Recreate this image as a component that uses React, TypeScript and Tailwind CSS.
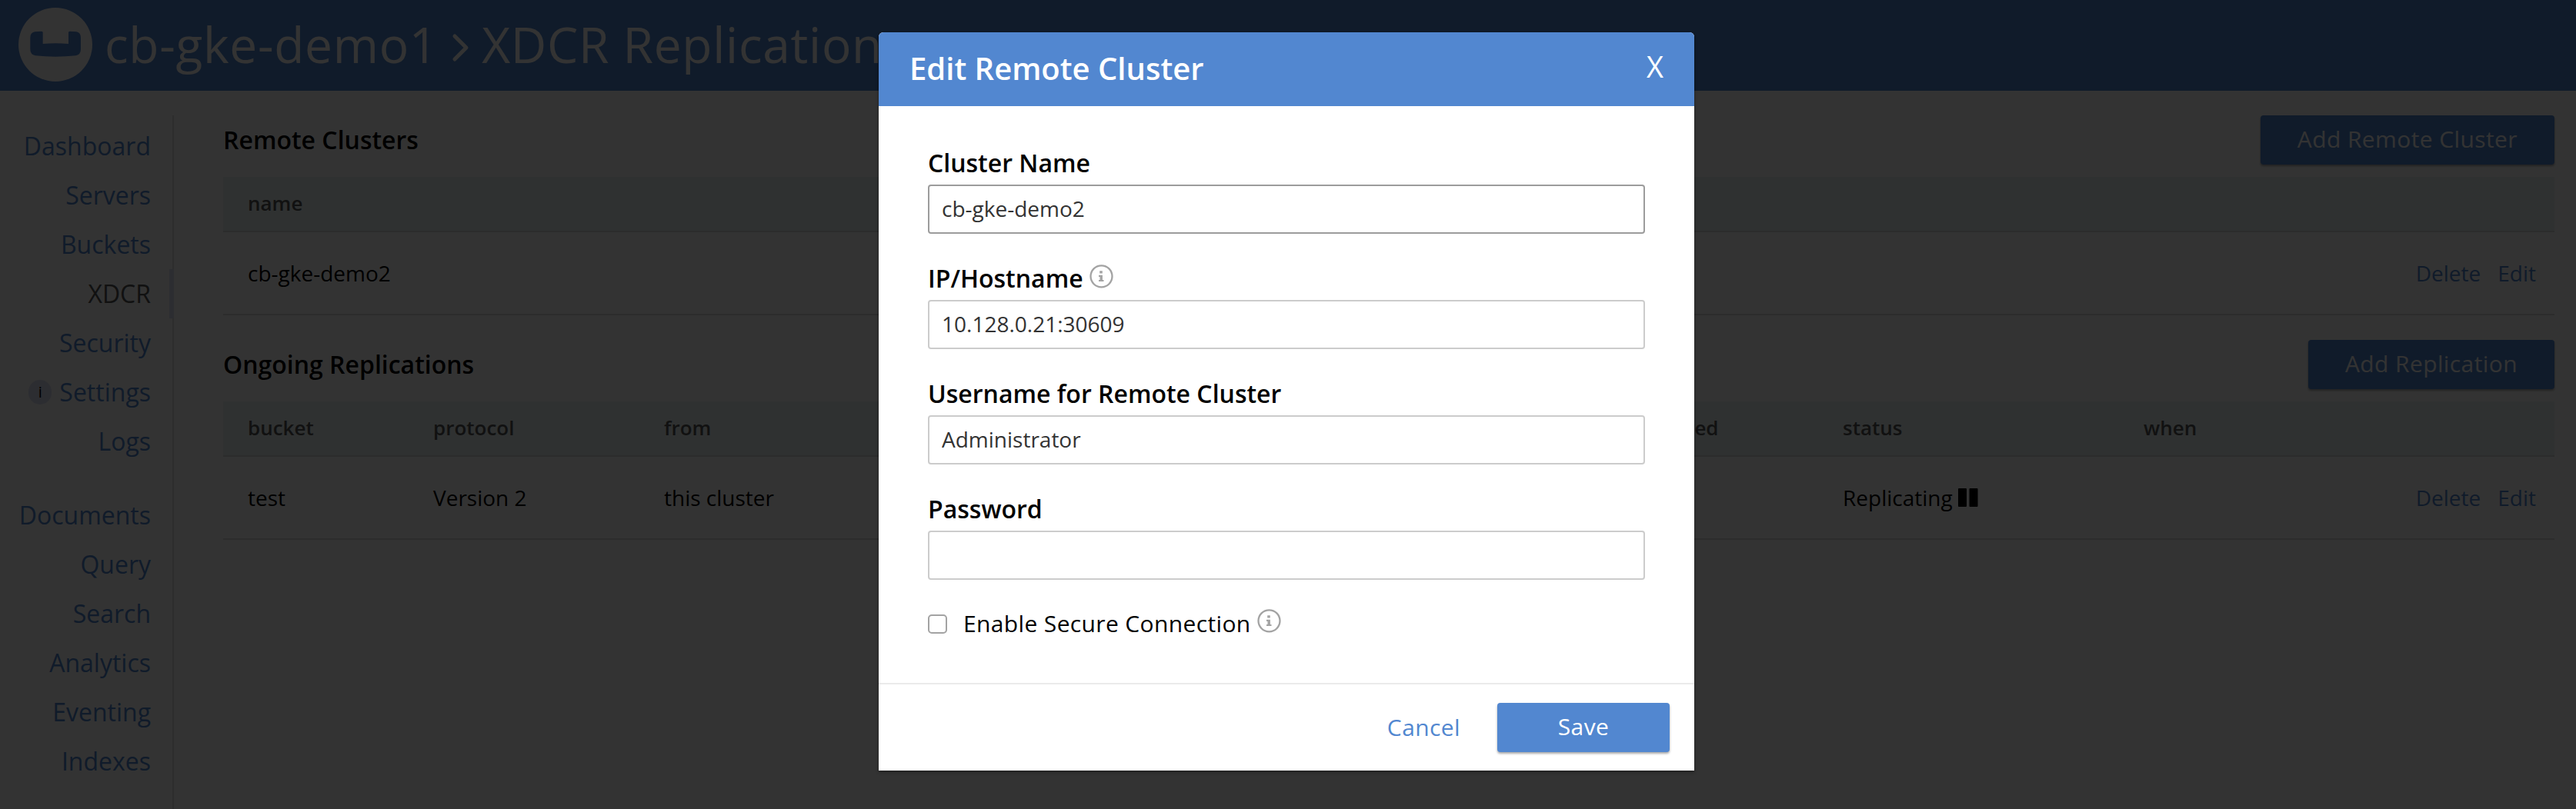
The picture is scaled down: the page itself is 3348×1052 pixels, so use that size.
import type { ReactNode } from "react";

const primaryNav = ["Dashboard", "Servers", "Buckets", "XDCR", "Security", "Settings", "Logs"];
const serviceNav = ["Documents", "Query", "Search", "Analytics", "Eventing", "Indexes"];

function Logo() {
  return (
    <svg className="size-24 shrink-0" viewBox="0 0 96 96">
      <circle cx="48" cy="48" r="48" fill="#fff" />
      <path
        fill="#5287d0"
        d="M21 31.3Q26 30.7 30 30.7Q31.7 30.7 31.7 32.3V46.9Q48 45.6 65 46.9V32.3Q65 30.7 66.7 30.7Q71 30.7 75.5 31.3Q81 32.5 81 39V54Q81 61 74.5 62.3Q48 65 22 62.3Q15.3 61 15.3 54V39Q15.3 32.5 21 31.3Z"
      />
    </svg>
  );
}

function InfoIcon() {
  return (
    <svg className="size-[31px] shrink-0" viewBox="0 0 31 31">
      <circle cx="15.5" cy="15.3" r="14" fill="none" stroke="#a3a3a3" strokeWidth="2.3" />
      <path
        fill="#a3a3a3"
        d="M13.2 8.3h3.6v3.2h-3.6zM12 13.7h4.9v6.2h1.6v2.2H12v-2.2h1.5v-4H12z"
      />
    </svg>
  );
}

function NavItem({ label }: { label: string }) {
  const active = label === "XDCR";
  return (
    <a
      className={
        active
          ? "flex h-16 items-center justify-end border-r-[6px] border-[#dde0f2] pr-6 text-[#555]"
          : "flex h-16 items-center justify-end pr-[30px] text-[#5287d0]"
      }
    >
      {label === "Settings" && (
        <span className="mr-2.5 flex h-8 w-[30px] items-center justify-center rounded-full bg-[#dde0f2] text-[20px] leading-8 text-black">
          i
        </span>
      )}
      {label}
    </a>
  );
}

function SectionHeader({ title, action }: { title: string; action: string }) {
  return (
    <div className="mb-4 flex h-16 items-start justify-between">
      <h2 className="text-[32px] leading-[64px] font-semibold">{title}</h2>
      <button className="h-16 rounded bg-[#5287d0] px-12 pb-0.5 text-[30px] leading-[62px] tracking-[0.4px] text-white shadow-[0_2px_3px_rgba(0,0,0,0.35)]">
        {action}
      </button>
    </div>
  );
}

function HeadRow({ children }: { children: ReactNode }) {
  return (
    <div className="flex h-[72px] border-b-2 border-[#ddd] bg-[#ebf5f2] pl-8 text-[26px] leading-[68px] font-semibold text-[#555]">
      {children}
    </div>
  );
}

function BodyRow({ children }: { children: ReactNode }) {
  return (
    <div className="flex h-[108px] border-b-2 border-[#ddd] pr-6 pl-8 text-[28px] leading-[106px]">
      {children}
      <div className="ml-auto flex gap-[22px] text-[#5287d0]">
        <a>Delete</a>
        <a>Edit</a>
      </div>
    </div>
  );
}

function Field({
  label,
  value,
  info,
  focused,
  type = "text",
}: {
  label: string;
  value: string;
  info?: boolean;
  focused?: boolean;
  type?: string;
}) {
  return (
    <div className="mb-9">
      <label className="mb-1.5 flex h-11 gap-2 text-[32px] leading-[44px] font-semibold">
        {label}
        {info && (
          <span className="pt-1">
            <InfoIcon />
          </span>
        )}
      </label>
      <input
        type={type}
        defaultValue={value}
        className={
          focused
            ? "block h-16 w-full rounded border-2 border-[#9c9c9c] px-4 pb-0.5 text-[28px] text-[#333] outline-none"
            : "block h-16 w-full rounded border-2 border-[#ccc] px-4 pb-0.5 text-[28px] text-[#333] outline-none"
        }
      />
    </div>
  );
}

function EditDialog() {
  return (
    <div className="h-[960px] w-[1060px] rounded-t-md bg-white shadow-[0_2px_4px_rgba(0,0,0,0.4)]">
      <div className="flex h-24 justify-between rounded-t-md bg-[#5287d0] px-10 text-white">
        <h1 className="text-[40px] leading-[94px] font-semibold">Edit Remote Cluster</h1>
        <button className="h-[88px] text-[38px] leading-[88px]">X</button>
      </div>
      <div className="h-[750px] px-16 pt-[52px]">
        <Field label="Cluster Name" value="cb-gke-demo2" focused />
        <Field label="IP/Hostname" value="10.128.0.21:30609" info />
        <Field label="Username for Remote Cluster" value="Administrator" />
        <Field label="Password" value="" type="password" />
        <label className="-mt-0.5 flex h-11 text-[30px] leading-[46px] tracking-[0.36px]">
          <input
            type="checkbox"
            className="mt-[11px] mr-[21px] size-[25px] appearance-none rounded-[5px] border-2 border-[#a3a3a3]"
          />
          Enable Secure Connection
          <span className="pt-1 pl-2">
            <InfoIcon />
          </span>
        </label>
      </div>
      <div className="flex h-[114px] justify-end gap-12 border-t-2 border-[#ebebeb] px-8 pt-6 text-[30px] tracking-[0.4px]">
        <button className="h-16 leading-[64px] text-[#5287d0]">Cancel</button>
        <button className="h-16 w-56 rounded bg-[#5287d0] pb-0.5 leading-[62px] text-white shadow-[0_2px_3px_rgba(0,0,0,0.35)]">
          Save
        </button>
      </div>
    </div>
  );
}

export default function App() {
  return (
    <div className="relative flex h-[1052px] w-[3348px] flex-col overflow-hidden bg-white font-['Open_Sans',sans-serif] text-black">
      <header className="flex h-[118px] shrink-0 items-center bg-[#5287d0] pb-0.5 pl-6 text-[64px] leading-[90px] tracking-[0.7px] text-white">
        <Logo />
        <span className="ml-4">cb-gke-demo1</span>
        <svg className="mr-[15px] ml-[18px] mt-2 h-10 w-6 shrink-0" viewBox="0 0 24 40">
          <path
            d="M4 5L19 20L4 35"
            fill="none"
            stroke="#fff"
            strokeWidth="5"
            strokeLinecap="round"
            strokeLinejoin="round"
          />
        </svg>
        <span>XDCR Replications</span>
      </header>

      <div className="flex flex-1 pt-8">
        <nav className="flex w-[226px] shrink-0 flex-col gap-8 bg-[linear-gradient(#dfdfe2,#dfdfe2)] bg-[length:2px_100%] bg-right bg-no-repeat pt-2 text-[32px] leading-[64px]">
          <div>
            {primaryNav.map((item) => (
              <NavItem key={item} label={item} />
            ))}
          </div>
          <div>
            {serviceNav.map((item) => (
              <NavItem key={item} label={item} />
            ))}
          </div>
        </nav>

        <main className="flex flex-1 flex-col gap-8 pr-7 pl-16">
          <section>
            <SectionHeader title="Remote Clusters" action="Add Remote Cluster" />
            <HeadRow>
              <span>name</span>
            </HeadRow>
            <BodyRow>
              <span>cb-gke-demo2</span>
            </BodyRow>
          </section>
          <section>
            <SectionHeader title="Ongoing Replications" action="Add Replication" />
            <HeadRow>
              <span className="w-[241px]">bucket</span>
              <span className="w-[300px]">protocol</span>
              <span className="w-[400px]">from</span>
              <span className="w-[800px]">to</span>
              <span className="w-[332px] pl-[79px]">filtered</span>
              <span className="w-[391px]">status</span>
              <span>when</span>
            </HeadRow>
            <BodyRow>
              <span className="w-[241px]">test</span>
              <span className="w-[300px]">Version 2</span>
              <span className="w-[1532px]">this cluster</span>
              <span className="flex items-center">
                Replicating
                <svg className="ml-[7px] h-6 w-[26px]" viewBox="0 0 26 24">
                  <rect width="11" height="24" rx="1" />
                  <rect x="14.5" width="11" height="24" rx="1" />
                </svg>
              </span>
            </BodyRow>
          </section>
        </main>
      </div>

      <div className="absolute inset-0 flex items-start justify-center bg-black/80 pt-[42px] pr-1">
        <EditDialog />
      </div>
    </div>
  );
}
